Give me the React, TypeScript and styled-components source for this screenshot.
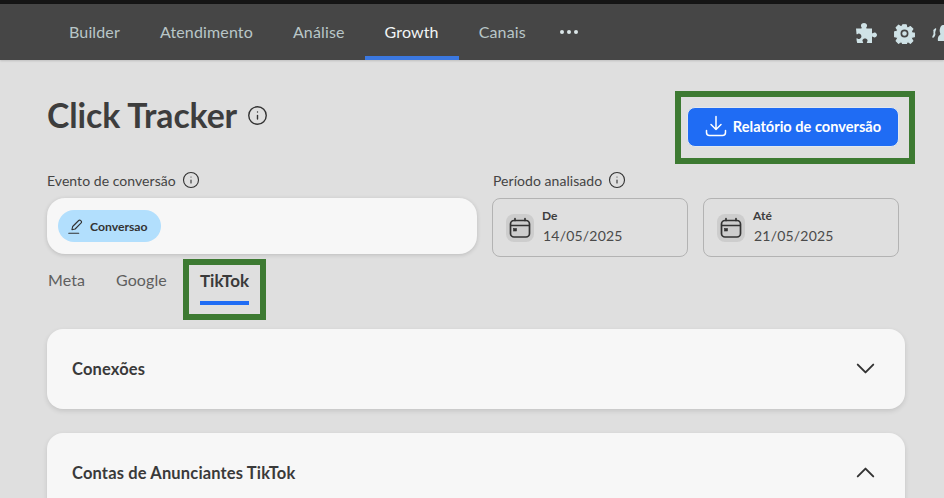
import React from "react";
import styled, { createGlobalStyle } from "styled-components";
import { Info, ChevronDown, ChevronUp } from "lucide-react";

const Global = createGlobalStyle`
  html, body { margin: 0; padding: 0; height: 100%; overflow: hidden; background: #dfdfdf; }
  * { box-sizing: border-box; }
  body { font-family: "Lato", "Noto Sans", sans-serif; color: #3a3a3a; }
`;
const Page = styled.div`width: 944px; height: 498px; overflow: hidden; display: flex; flex-direction: column;`;
const TopStrip = styled.div`height: 4px; background: #151515; flex: none;`;
const Nav = styled.nav`height: 56px; flex: none; background: #464646; display: flex; align-items: stretch; padding-left: 49px; box-shadow: 0 1px 2px rgba(0,0,0,.15);`;
const NavItem = styled.a<{ $active?: boolean }>`
  display: flex; align-items: center; padding: 4px 20px 2px; font-size: 16px; letter-spacing: .14px;
  color: ${p => (p.$active ? "#f2f5f5" : "#b9c6c8")};
  border-bottom: 4px solid ${p => (p.$active ? "#3b78e0" : "transparent")};
`;
const Dots = styled.div`display: flex; align-items: center; gap: 2.5px; margin-left: 14px;`;
const Dot = styled.span`width: 4.5px; height: 4.5px; border-radius: 50%; background: #dbe6e8;`;
const NavIcons = styled.div`margin-left: auto; display: flex; align-items: center; gap: 17px; color: #cfe2e6; margin-right: -12px; flex: none; padding-top: 2px;`;
const Content = styled.main`flex: 1; padding: 31px 29px 0 47px; min-height: 0;`;
const Header = styled.div`display: flex; justify-content: space-between; align-items: flex-start;`;
const TitleRow = styled.div`display: flex; align-items: center; gap: 10px; padding-top: 4px;`;
const Title = styled.h1`margin: 0; font-size: 33.8px; line-height: 40px; font-weight: 700; color: #3d3d3d; letter-spacing: -.1px;`;
const Highlight = styled.div`border: 6px solid #3d7a32; flex: none;`;
const ButtonBox = styled(Highlight)`width: 240px; height: 73px; padding: 10px 0 0 6px;`;
const ExportButton = styled.button`
  width: 212px; height: 40px; border: 1px solid #e2e8ef; border-radius: 8px; background: #1f6cf4; color: #fff;
  display: flex; align-items: center; justify-content: center; gap: 6px; font: 700 14.6px "Lato", sans-serif; padding: 0 0 2px;
`;
const Filters = styled.div`display: flex; margin-top: 7px; gap: 15px;`;
const EventCol = styled.section`width: 430px; flex: none;`;
const DateCol = styled.section`flex: 1; min-width: 0;`;
const Label = styled.div`display: flex; align-items: center; gap: 6px; height: 18px; font-size: 14px; color: #444; letter-spacing: .05px;`;
const DateLabelRow = styled(Label)`padding-left: 1px;`;
const EventField = styled.div`
  margin-top: 9px; height: 56px; background: #f7f7f7; border-radius: 18px; display: flex; align-items: center; padding: 0 11px;
  box-shadow: 0 1px 4px rgba(0,0,0,.16);
`;
const Chip = styled.div`height: 32px; width: 103px; border-radius: 16px; background: #b2dffd; display: flex; align-items: center; gap: 6px; padding-left: 9px; font-size: 12.2px; font-weight: 700; color: #333;`;
const DateRow = styled.div`margin-top: 9px; display: flex; gap: 15px; width: 407px;`;
const DateBox = styled.div`flex: 1; height: 59px; border: 1px solid #b3b3b3; border-radius: 8px; display: flex; align-items: center; gap: 8px; padding: 0 13px;`;
const IconTile = styled.div`width: 28px; height: 28px; border-radius: 8px; background: #cdcdcd; display: flex; align-items: center; justify-content: center; flex: none;`;
const DateText = styled.div`display: flex; flex-direction: column; gap: 5px; margin-top: -3px;`;
const DateLabel = styled.span`font-size: 12px; font-weight: 700; line-height: 14px; color: #3d3d3d;`;
const DateValue = styled.span`font-size: 14px; line-height: 16px; color: #4a4a4a; letter-spacing: .2px; margin-left: 1px;`;
const Tabs = styled.div`display: flex; align-items: flex-start; margin-top: 2px; height: 61px; padding-left: 1px;`;
const Tab = styled.div<{ $w: number }>`width: ${p => p.$w}px; padding-top: 11px; font-size: 16px; line-height: 20px; color: #5e5e5e; letter-spacing: .1px;`;
const TabBox = styled(Highlight)`width: 83px; height: 61px; padding: 6px 11px 0; display: flex; flex-direction: column; font-size: 17px; line-height: 20px; font-weight: 700; color: #3a3a3a;`;
const TabBar = styled.div`height: 4px; background: #1f6cf4; margin-top: 10px;`;
const Accordion = styled.section<{ $grow?: boolean }>`
  width: 858px; height: ${p => (p.$grow ? 120 : 80)}px; margin-top: ${p => (p.$grow ? 24 : 9)}px; background: #f7f7f7; border-radius: 16px;
  box-shadow: 0 2px 5px rgba(0,0,0,.12); padding: 0 24px 0 25px;
`;
const AccHead = styled.div`height: 79px; display: flex; align-items: center; justify-content: space-between;`;
const AccTitle = styled.span`font-size: 16.5px; letter-spacing: .15px; font-weight: 700; color: #3a3a3a;`;

const Pencil = () => (
  <svg width="17" height="17" viewBox="0 0 24 24" fill="none" stroke="#333" strokeWidth="1.6" strokeLinecap="round" strokeLinejoin="round">
    <path d="M7 16.500l1-4.500L16.500 3.500a1.800 1.800 0 0 1 2.600 0l.9.9a1.800 1.800 0 0 1 0 2.600L11.500 15.500z" />
    <path d="M2.500 21.500h14" />
  </svg>
);
const Calendar = () => (
  <svg width="22" height="22" viewBox="0 0 22 22" fill="none" stroke="#333" strokeWidth="1.7" strokeLinecap="round">
    <rect x="1.5" y="3.5" width="19" height="16.5" rx="3.5" />
    <path d="M2 8.500h18M6 1.500v2M16 1.500v2" />
    <rect x="4.5" y="11.5" width="3" height="2.5" fill="#333" strokeWidth="0.6" />
  </svg>
);
const Download = () => (
  <svg width="22" height="22" viewBox="0 0 22 22" fill="none" stroke="#fff" strokeWidth="1.5" strokeLinecap="round" strokeLinejoin="round">
    <path d="M11 1.500v13M6 9.500l5 5 5-5" />
    <path d="M1.500 15.500v2a3 3 0 0 0 3 3h13a3 3 0 0 0 3-3v-2" />
  </svg>
);
const Puzzle = () => (
  <svg width="22" height="22" viewBox="0 0 22 22" fill="currentColor">
    <path d="M1 6.500h5.200c.5 0 .7-.4.4-.9C6 4.700 5.800 4 6 3c.3-1.300 1.500-2 3-2s2.700.8 3 2c.2 1-.1 1.800-.7 2.600-.3.4-.1.9.4.9H17v4.300c0 .5.500.7.900.4.700-.5 1.400-.8 2-.6C21 10.900 22 11.900 22 13s-1 2.200-2.100 2.400c-.6.100-1.300-.2-2-.7-.4-.3-.9-.1-.9.400V21h-4.700c-.5 0-.6-.5-.3-.9.5-.7.700-1.300.5-2-.3-1-1.300-1.600-2.500-1.600s-2.200.6-2.500 1.600c-.2.700 0 1.300.5 2 .3.400.2.900-.3.900H2.200c-.5-1.500-.7-3-.7-4.300 0-.5.500-.6.900-.3.600.5 1.300.7 2 .5 1.200-.3 2-1.300 2-2.600s-.8-2.300-2-2.600c-.7-.2-1.400 0-2 .5-.4.300-.9.200-.9-.3z" />
  </svg>
);
const Gear = () => (
  <svg width="21" height="21" viewBox="0 0 24 24">
    <path fill="currentColor" d="M9.800 1h4.400l.6 3.300 1.900.8 2.800-1.900 3.100 3.100-1.900 2.800.8 1.900 3 .6v4.400l-3 .6-.8 1.900 1.900 2.800-3.100 3.100-2.800-1.900-1.900.8-.6 3.300H9.800l-.6-3.300-1.900-.8-2.800 1.900-3.100-3.100 1.900-2.800-.8-1.900-3-.6V9.800l3-.6.8-1.900L1.400 4.500l3.100-3.100 2.800 1.900 1.900-.8z" transform="translate(1.200 1.200) scale(.9)" stroke="currentColor" strokeWidth="1.500" strokeLinejoin="round" />
    <circle cx="12" cy="12" r="3.600" fill="currentColor" stroke="#464646" strokeWidth="1.900" />
  </svg>
);
const Users = () => (
  <svg width="24" height="22" viewBox="0 -3 24 22" fill="currentColor">
    <path d="M3 3.500c.8-.6 1.400-.2 1.200.7-.3 1-.9 2-1 3-.1.900.3 1.600.2 2.400-.2 1-.8 2.300-1.800 3-.7.500-1.400.100-1.300-.7.100-1 1-1.800 1.200-2.800.2-1-.3-1.700 0-2.800C.700 5.300 1.900 4.300 3 3.500z" />
    <path d="M11 0c3 0 7 2 7 4.500S16 9 14 9.500c3 .5 5.500 2 6 5v1.500H6c-.5-2 0-4.500 1.500-5.700 1-.5 1-1.300.7-2.100C7.500 6.500 7.500 5 8 3.500 8.500 1.300 9.500 0 11 0z" />
  </svg>
);

export default function App() {
  return (
    <Page>
      <Global />
      <TopStrip />
      <Nav>
        <NavItem>Builder</NavItem>
        <NavItem>Atendimento</NavItem>
        <NavItem>Análise</NavItem>
        <NavItem $active>Growth</NavItem>
        <NavItem>Canais</NavItem>
        <Dots><Dot /><Dot /><Dot /></Dots>
        <NavIcons>
          <Puzzle />
          <Gear />
          <Users />
        </NavIcons>
      </Nav>
      <Content>
        <Header>
          <TitleRow>
            <Title>Click Tracker</Title>
            <Info size={21} color="#333" strokeWidth={1.6} />
          </TitleRow>
          <ButtonBox>
            <ExportButton><Download />Relatório de conversão</ExportButton>
          </ButtonBox>
        </Header>
        <Filters>
          <EventCol>
            <Label>Evento de conversão <Info size={18} color="#333" strokeWidth={1.5} /></Label>
            <EventField>
              <Chip><Pencil />Conversao</Chip>
            </EventField>
          </EventCol>
          <DateCol>
            <DateLabelRow>Período analisado <Info size={18} color="#333" strokeWidth={1.5} /></DateLabelRow>
            <DateRow>
              <DateBox>
                <IconTile><Calendar /></IconTile>
                <DateText><DateLabel>De</DateLabel><DateValue>14/05/2025</DateValue></DateText>
              </DateBox>
              <DateBox>
                <IconTile><Calendar /></IconTile>
                <DateText><DateLabel>Até</DateLabel><DateValue>21/05/2025</DateValue></DateText>
              </DateBox>
            </DateRow>
          </DateCol>
        </Filters>
        <Tabs>
          <Tab $w={68}>Meta</Tab>
          <Tab $w={67}>Google</Tab>
          <TabBox>TikTok<TabBar /></TabBox>
        </Tabs>
        <Accordion>
          <AccHead><AccTitle>Conexões</AccTitle><ChevronDown size={31} color="#333" strokeWidth={1.5} /></AccHead>
        </Accordion>
        <Accordion $grow>
          <AccHead><AccTitle>Contas de Anunciantes TikTok</AccTitle><ChevronUp size={31} color="#333" strokeWidth={1.5} /></AccHead>
        </Accordion>
      </Content>
    </Page>
  );
}
